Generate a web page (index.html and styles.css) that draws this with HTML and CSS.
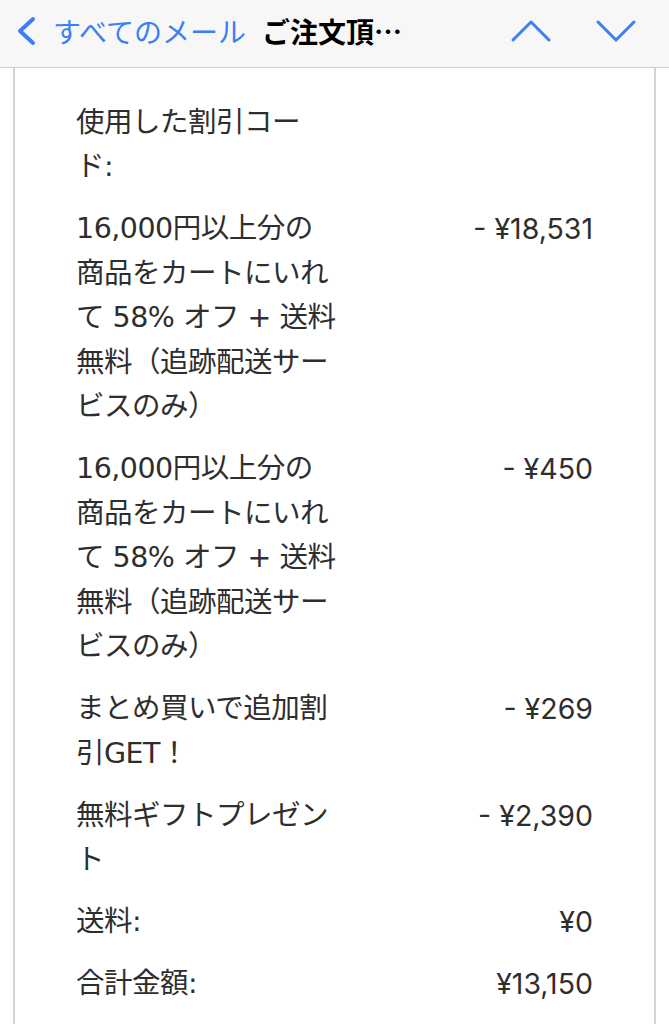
FILE: index.html
```html
<!DOCTYPE html>
<html lang="ja">
<head>
    <meta charset="UTF-8">
    <meta name="viewport" content="width=device-width, initial-scale=1.0">
    <title>ご注文頂きありがとうございます</title>
    <link rel="stylesheet" href="styles.css">
</head>
<body>

    <header class="topbar">
        <a class="back" href="#">
            <svg class="back-icon" width="22" height="32" viewBox="0 0 22 32">
                <path d="M18 4 L5 16 L18 28" />
            </svg>
            <span>すべてのメール</span>
        </a>
        <div class="subject">ご注文頂…</div>
        <div class="nav">
            <svg class="nav-icon" width="42" height="26" viewBox="0 0 42 26">
                <path d="M3 22 L21 4 L39 22" />
            </svg>
            <svg class="nav-icon" width="42" height="26" viewBox="0 0 42 26">
                <path d="M3 4 L21 22 L39 4" />
            </svg>
        </div>
    </header>

    <div class="mail">
        <div class="totals">
            <div class="row">
                <div class="label">使用した割引コード:</div>
                <div class="amount"></div>
            </div>
            <div class="row">
                <div class="label">16,000円以上分の商品をカートにいれて 58% オフ + 送料無料（追跡配送サービスのみ）</div>
                <div class="amount">- ¥18,531</div>
            </div>
            <div class="row">
                <div class="label">16,000円以上分の商品をカートにいれて 58% オフ + 送料無料（追跡配送サービスのみ）</div>
                <div class="amount">- ¥450</div>
            </div>
            <div class="row">
                <div class="label">まとめ買いで追加割引GET！</div>
                <div class="amount">- ¥269</div>
            </div>
            <div class="row">
                <div class="label">無料ギフトプレゼント</div>
                <div class="amount">- ¥2,390</div>
            </div>
            <div class="row">
                <div class="label">送料:</div>
                <div class="amount">¥0</div>
            </div>
            <div class="row">
                <div class="label">合計金額:</div>
                <div class="amount">¥13,150</div>
            </div>
        </div>
    </div>

</body>
</html>
```

FILE: styles.css
```css
body {
    margin: 0;
    background: #fff;
    font-family: "Noto Sans CJK JP", "Noto Sans", sans-serif;
    color: #2e2e2e;
    height: 1024px;
    overflow: hidden;
}
.topbar {
    height: 68px;
    box-sizing: border-box;
    padding: 0 0 6px 15px;
    display: flex;
    align-items: center;
    background: #f7f7f7;
    border-bottom: 1px solid #cfcfcf;
}
.back {
    display: flex;
    align-items: center;
    gap: 16px;
    color: #3a7ff5;
    text-decoration: none;
    font-size: 28px;
}
.back-icon path, .nav-icon path {
    fill: none;
    stroke: #3a7ff5;
    stroke-linecap: round;
    stroke-linejoin: round;
}
.back-icon path {
    stroke-width: 4;
}
.nav-icon path {
    stroke-width: 3;
}
.subject {
    margin-left: 16px;
    font-size: 28px;
    font-weight: bold;
    color: #000;
}
.nav {
    margin-left: auto;
    margin-right: 32px;
    display: flex;
    gap: 43px;
}
.mail {
    margin: 0 13px;
    border-left: 2px solid #d4d4d4;
    border-right: 2px solid #d4d4d4;
    min-height: 955px;
    padding: 24px 61px 0 61px;
}
.row {
    display: flex;
    justify-content: space-between;
    align-items: flex-start;
    padding: 8.75px 0;
    font-family: "DejaVu Sans", "Noto Sans CJK JP", sans-serif;
    font-size: 28.5px;
    line-height: 44.5px;
}
.label {
    width: 260px;
    letter-spacing: -0.5px;
}
.amount {
    font-family: Inter, "Noto Sans CJK JP", sans-serif;
    text-align: right;
    white-space: nowrap;
}
```
